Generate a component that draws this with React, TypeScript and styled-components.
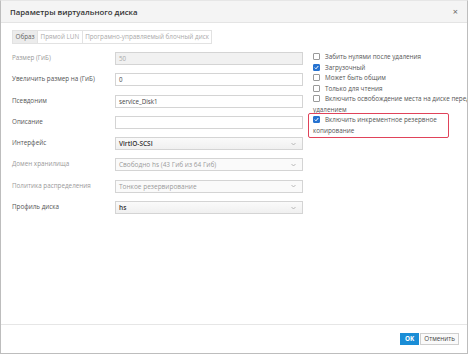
import React from 'react'
import styled, { createGlobalStyle } from 'styled-components'

const GlobalStyle = createGlobalStyle`
  html, body {
    margin: 0;
    padding: 0;
    background: #ffffff;
  }
  body {
    font-family: "Open Sans", "Liberation Sans", sans-serif;
    color: #555;
  }
`

const Dialog = styled.div`
  width: 468px;
  height: 354px;
  box-sizing: border-box;
  border: 1px solid #bdbdbd;
  border-top-color: #e6e6e6;
  display: flex;
  flex-direction: column;
  overflow: hidden;
  background: #fff;
`

const Header = styled.div`
  height: 21px;
  flex: none;
  background: #f4f4f4;
  border-bottom: 1px solid #e4e4e4;
  display: flex;
  align-items: center;
  justify-content: space-between;
  padding: 0 9px 0 9px;
`

const Title = styled.div`
  font-size: 7.8px;
  font-weight: 600;
  color: #333;
`

const Close = styled.span`
  font-size: 9px;
  color: #666;
  line-height: 1;
`

const Body = styled.div`
  flex: 1;
  padding: 7px 0 0 11px;
`

const Tabs = styled.div`
  display: flex;
  height: 14px;
`

const Tab = styled.div<{ $active?: boolean }>`
  font-size: 6.3px;
  line-height: 12px;
  padding: 0 2.5px;
  border: 1px solid #e2e2e2;
  margin-right: -1px;
  background: ${p => (p.$active ? '#ececec' : '#fff')};
  color: ${p => (p.$active ? '#666' : '#aaa')};
`

const Columns = styled.div`
  display: flex;
  margin-top: 8px;
`

const Form = styled.div`
  width: 291px;
  display: grid;
  grid-template-columns: 103px 188px;
  grid-auto-rows: 13px;
  row-gap: 8.3px;
`

const Label = styled.div<{ $disabled?: boolean }>`
  font-size: 6.3px;
  line-height: 12px;
  color: ${p => (p.$disabled ? '#9a9a9a' : '#555')};
`

const Input = styled.div<{ $disabled?: boolean }>`
  box-sizing: border-box;
  height: 13px;
  border: 1px solid #d4d4d4;
  background: ${p => (p.$disabled ? '#f1f1f1' : '#fff')};
  color: ${p => (p.$disabled ? '#aaa' : '#444')};
  font-size: 6.2px;
  line-height: 11px;
  padding: 0 3px;
`

const Select = styled.div<{ $disabled?: boolean }>`
  box-sizing: border-box;
  height: 13px;
  border: 1px solid #d4d4d4;
  background: ${p => (p.$disabled ? '#fafafa' : 'linear-gradient(#fafafa, #f0f0f0)')};
  color: ${p => (p.$disabled ? '#9a9a9a' : '#333')};
  font-weight: ${p => (p.$disabled ? 400 : 600)};
  font-size: 6.5px;
  line-height: 11px;
  padding: 0 3px;
  display: flex;
  justify-content: space-between;
  align-items: center;
`

const Chevron = styled.svg`
  width: 5px;
  height: 4px;
  margin-right: 3px;
`

const Options = styled.div`
  margin-left: 10px;
  width: 160px;
  flex: none;
`

const Option = styled.div<{ $marked?: boolean }>`
  position: relative;
  font-size: 6.3px;
  line-height: 10.5px;
  color: #555;
  ${p =>
    p.$marked &&
    `
    &::after {
      content: '';
      position: absolute;
      left: -5px;
      top: -2.5px;
      width: 139px;
      height: 23px;
      border: 1px solid #e0435a;
      border-radius: 2px;
    }
  `}
`

const Box = styled.span<{ $checked?: boolean }>`
  display: inline-block;
  box-sizing: border-box;
  width: 7px;
  height: 7px;
  margin-right: 5px;
  vertical-align: -1px;
  border-radius: 1px;
  border: 1px solid ${p => (p.$checked ? '#2672d0' : '#9a9a9a')};
  background: ${p => (p.$checked ? '#2672d0' : '#fff')};
  position: relative;
  svg {
    position: absolute;
    left: 0;
    top: 0;
  }
`

const Footer = styled.div`
  flex: none;
  height: 28px;
  border-top: 1px solid #e6e6e6;
  display: flex;
  justify-content: flex-end;
  align-items: center;
  padding: 0 8px 0 0;
  gap: 1px;
`

const Button = styled.button<{ $primary?: boolean }>`
  font-family: "Open Sans", "Liberation Sans", sans-serif;
  font-size: 6.3px;
  height: 12px;
  padding: 0 ${p => (p.$primary ? 4 : 3)}px;
  line-height: 10px;
  border: 1px solid ${p => (p.$primary ? '#1a8dd6' : '#cfcfcf')};
  background: ${p => (p.$primary ? '#1a8dd6' : '#fafafa')};
  color: ${p => (p.$primary ? '#fff' : '#444')};
  font-weight: ${p => (p.$primary ? 700 : 400)};
  margin: 0;
`

const Check = () => (
  <svg width="5" height="5" viewBox="0 0 5 5">
    <path d="M0.8 2.6 L2 3.8 L4.3 1" fill="none" stroke="#fff" strokeWidth="1" />
  </svg>
)

const Arrow = () => (
  <Chevron viewBox="0 0 5 4">
    <path d="M0.5 1 L2.5 3 L4.5 1" fill="none" stroke="#aaa" strokeWidth="0.8" />
  </Chevron>
)

const rows: { label: string; kind: 'input' | 'select'; value: string; disabled?: boolean }[] = [
  { label: 'Размер (ГиБ)', kind: 'input', value: '50', disabled: true },
  { label: 'Увеличить размер на (ГиБ)', kind: 'input', value: '0' },
  { label: 'Псевдоним', kind: 'input', value: 'service_Disk1' },
  { label: 'Описание', kind: 'input', value: '' },
  { label: 'Интерфейс', kind: 'select', value: 'VirtIO-SCSI' },
  { label: 'Домен хранилища', kind: 'select', value: 'Свободно hs (43 Гиб из 64 Гиб)', disabled: true },
  { label: 'Политика распределения', kind: 'select', value: 'Тонкое резервирование', disabled: true },
  { label: 'Профиль диска', kind: 'select', value: 'hs' },
]

const options: { text: string; checked?: boolean; marked?: boolean }[] = [
  { text: 'Забить нулями после удаления' },
  { text: 'Загрузочный', checked: true },
  { text: 'Может быть общим' },
  { text: 'Только для чтения' },
  { text: 'Включить освобождение места на диске перед удалением' },
  { text: 'Включить инкрементное резервное копирование', checked: true, marked: true },
]

const App: React.FC = () => {
  return (
    <>
      <GlobalStyle />
      <Dialog>
        <Header>
          <Title>Параметры виртуального диска</Title>
          <Close>×</Close>
        </Header>
        <Body>
          <Tabs>
            <Tab $active>Образ</Tab>
            <Tab>Прямой LUN</Tab>
            <Tab>Програмно-управляемый блочный диск</Tab>
          </Tabs>
          <Columns>
            <Form>
              {rows.map(r => (
                <React.Fragment key={r.label}>
                  <Label $disabled={r.disabled}>{r.label}</Label>
                  {r.kind === 'input' ? (
                    <Input $disabled={r.disabled}>{r.value}</Input>
                  ) : (
                    <Select $disabled={r.disabled}>
                      <span>{r.value}</span>
                      <Arrow />
                    </Select>
                  )}
                </React.Fragment>
              ))}
            </Form>
            <Options>
              {options.map(o => (
                <Option key={o.text} $marked={o.marked}>
                  <Box $checked={o.checked}>{o.checked && <Check />}</Box>
                  {o.text}
                </Option>
              ))}
            </Options>
          </Columns>
        </Body>
        <Footer>
          <Button $primary>OK</Button>
          <Button>Отменить</Button>
        </Footer>
      </Dialog>
    </>
  )
}

export default App
